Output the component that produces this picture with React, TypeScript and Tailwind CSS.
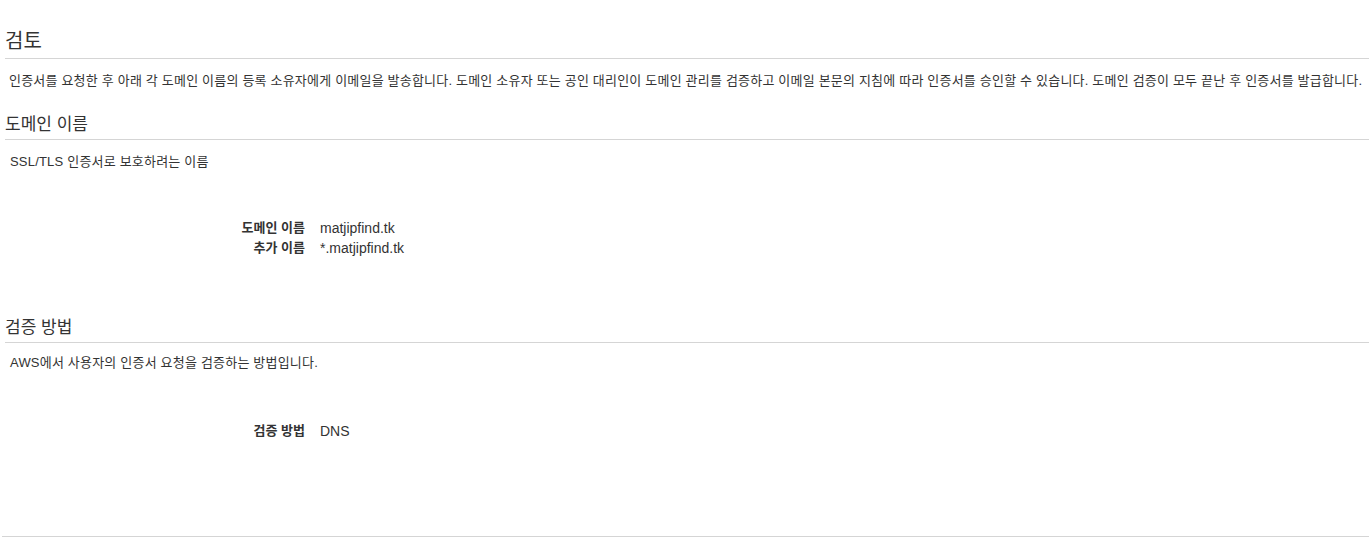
import React from 'react';

const font = { fontFamily: '"Liberation Sans", "Noto Sans CJK KR", sans-serif' };

function SectionTitle({ children, big = false }: { children: React.ReactNode; big?: boolean }) {
  return (
    <h2
      className={
        big
          ? 'text-[20px] leading-[24px] text-[#333] pb-[5px] border-b border-[#d5d5d5] ml-[5px]'
          : 'text-[17px] leading-[24px] text-[#333] pb-[2px] border-b border-[#d5d5d5] ml-[5px]'
      }
    >
      {children}
    </h2>
  );
}

function Field({ label, value }: { label: string; value: string }) {
  return (
    <div className="flex items-center h-[20px]">
      <div className="w-[305px] text-right text-[13px] font-bold text-[#333]">{label}</div>
      <div className="ml-[15px] text-[14px] text-[#333]">{value}</div>
    </div>
  );
}

export default function App() {
  return (
    <div className="min-h-screen bg-white" style={font}>
      <div className="pt-[29px]">
        <SectionTitle big>검토</SectionTitle>
        <p className="mt-[13px] pl-[9px] text-[13px] leading-[18px] tracking-[0.2px] text-[#333] whitespace-nowrap">
          인증서를 요청한 후 아래 각 도메인 이름의 등록 소유자에게 이메일을 발송합니다. 도메인 소유자 또는 공인 대리인이 도메인 관리를 검증하고 이메일 본문의 지침에 따라 인증서를 승인할 수 있습니다. 도메인 검증이 모두 끝난 후 인증서를 발급합니다.
        </p>

        <div className="mt-[23px]">
          <SectionTitle>도메인 이름</SectionTitle>
        </div>
        <p className="mt-[13px] pl-[10px] text-[13px] leading-[18px] tracking-[0.2px] text-[#333]">SSL/TLS 인증서로 보호하려는 이름</p>
        <div className="mt-[47px]">
          <Field label="도메인 이름" value="matjipfind.tk" />
          <Field label="추가 이름" value="*.matjipfind.tk" />
        </div>

        <div className="mt-[58px]">
          <SectionTitle>검증 방법</SectionTitle>
        </div>
        <p className="mt-[11px] pl-[10px] text-[13px] leading-[18px] tracking-[0.2px] text-[#333]">AWS에서 사용자의 인증서 요청을 검증하는 방법입니다.</p>
        <div className="mt-[49px]">
          <Field label="검증 방법" value="DNS" />
        </div>

        <div className="mt-[95px] ml-[2px] border-t border-[#d5d5d5]" />
      </div>
    </div>
  );
}
